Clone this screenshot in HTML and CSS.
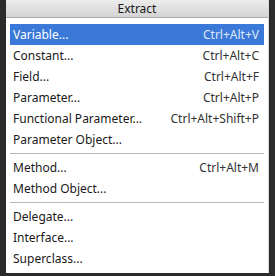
FILE: index.html
```html
<!DOCTYPE html>
<html lang="en">
<head>
  <meta charset="UTF-8" />
  <title>Extract</title>
  <link rel="stylesheet" href="styles.css">
</head>
<body>
  <div class="menu">
    <div class="menu-title">Extract</div>
    <ul class="menu-list">
      <li class="item active"><span>Variable...</span><span class="key">Ctrl+Alt+V</span></li>
      <li class="item"><span>Constant...</span><span class="key">Ctrl+Alt+C</span></li>
      <li class="item"><span>Field...</span><span class="key">Ctrl+Alt+F</span></li>
      <li class="item"><span>Parameter...</span><span class="key">Ctrl+Alt+P</span></li>
      <li class="item"><span>Functional Parameter...</span><span class="key">Ctrl+Alt+Shift+P</span></li>
      <li class="item"><span>Parameter Object...</span></li>
      <li class="sep"></li>
      <li class="item"><span>Method...</span><span class="key">Ctrl+Alt+M</span></li>
      <li class="item"><span>Method Object...</span></li>
      <li class="sep"></li>
      <li class="item"><span>Delegate...</span></li>
      <li class="item"><span>Interface...</span></li>
      <li class="item"><span>Superclass...</span></li>
    </ul>
  </div>
</body>
</html>
```

FILE: styles.css
```css
body {
  margin: 0;
  background: #2b2b2b;
  font-family: 'Noto Sans', sans-serif;
  font-size: 12px;
}

.menu {
  margin-left: 6px;
  width: 263px;
  height: 273px;
  background: #fff;
  box-sizing: border-box;
  border-right: 1px solid #d8d8d8;
}

.menu-title {
  height: 18px;
  line-height: 17px;
  text-align: center;
  color: #1a1a1a;
  background: linear-gradient(to bottom, #ececec, #d4d4d4);
  border-bottom: 1px solid #a8a8a8;
  box-sizing: border-box;
}

.menu-list {
  list-style: none;
  margin: 0;
  padding: 6px 4px 0 4px;
}

.item {
  display: flex;
  justify-content: space-between;
  height: 21px;
  line-height: 21px;
  padding: 0 5px 0 3px;
  color: #1a1a1a;
}

.item .key {
  color: #333;
}

.item.active {
  background: #3b79d9;
  color: #fff;
}

.item.active .key {
  color: #dfe8f7;
}

.sep {
  height: 1px;
  background: #b8b8b8;
  margin: 3px 0;
}
```
